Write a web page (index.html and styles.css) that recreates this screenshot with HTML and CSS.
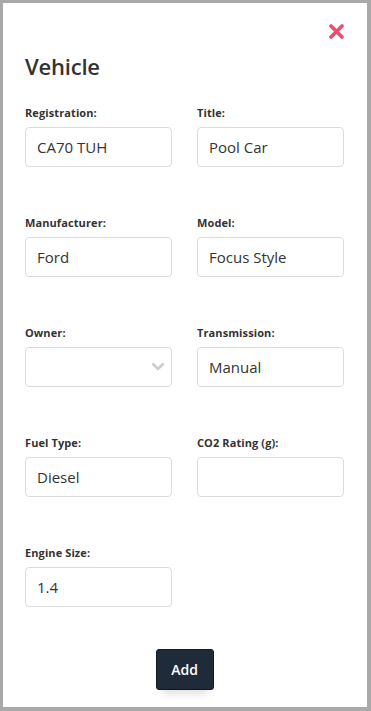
FILE: index.html
```html
<!DOCTYPE html>
<html>
  <head>
    <title>Vehicle</title>
    <meta name="viewport" content="width=device-width, initial-scale=1.0" />
    <link rel="stylesheet" href="styles.css">
  </head>
  <body>
    <div class="panel">
      <div class="panel-top">
        <button type="button" class="close" aria-label="Close">
          <svg width="15" height="15" viewBox="0 0 15 15">
            <path d="M2 2 L13 13 M13 2 L2 13" stroke="#f04a6e" stroke-width="3.6" stroke-linecap="round" />
          </svg>
        </button>
      </div>
      <h2>Vehicle</h2>
      <form class="fields">
        <div class="field">
          <label for="registration">Registration:</label>
          <input type="text" id="registration" value="CA70 TUH" />
        </div>
        <div class="field">
          <label for="title">Title:</label>
          <input type="text" id="title" value="Pool Car" />
        </div>
        <div class="field">
          <label for="manufacturer">Manufacturer:</label>
          <input type="text" id="manufacturer" value="Ford" />
        </div>
        <div class="field">
          <label for="model">Model:</label>
          <input type="text" id="model" value="Focus Style" />
        </div>
        <div class="field">
          <label for="owner">Owner:</label>
          <div class="select-box">
            <select id="owner">
              <option value=""></option>
            </select>
            <svg class="chevron" width="14" height="9" viewBox="0 0 14 9">
              <path d="M1.5 1.5 L7 7 L12.5 1.5" fill="none" stroke="#cccccc" stroke-width="2.6" />
            </svg>
          </div>
        </div>
        <div class="field">
          <label for="transmission">Transmission:</label>
          <input type="text" id="transmission" value="Manual" />
        </div>
        <div class="field">
          <label for="fuel">Fuel Type:</label>
          <input type="text" id="fuel" value="Diesel" />
        </div>
        <div class="field">
          <label for="co2">CO2 Rating (g):</label>
          <input type="text" id="co2" value="" />
        </div>
        <div class="field">
          <label for="engine">Engine Size:</label>
          <input type="text" id="engine" value="1.4" />
        </div>
      </form>
      <div class="actions">
        <button type="button" class="add">Add</button>
      </div>
    </div>
  </body>
</html>
```

FILE: styles.css
```css
body {
  font-family: "Open Sans", "Noto Sans", sans-serif;
  margin: 0;
  background-color: #a9a9a9;
  color: #333333;
}

.panel {
  background: white;
  margin: 3px 4px 4px 3px;
  height: 704px;
  box-sizing: border-box;
  padding: 21px 23px 0 22px;
}

.panel-top {
  display: flex;
  justify-content: flex-end;
}

.close {
  background: none;
  border: none;
  padding: 0;
  width: 15px;
  height: 15px;
  cursor: pointer;
  display: block;
}

.close svg {
  display: block;
}

h2 {
  font-size: 22px;
  font-weight: 600;
  margin: 12px 0 0 0;
  line-height: 30px;
  letter-spacing: -0.2px;
}

.fields {
  display: grid;
  grid-template-columns: 147px 147px;
  column-gap: 25px;
  row-gap: 48px;
  margin-top: 24px;
}

.field label {
  display: block;
  font-size: 11px;
  font-weight: 700;
  line-height: 16px;
  margin-bottom: 6px;
  letter-spacing: 0.1px;
}

.field input,
.select-box select {
  display: block;
  width: 100%;
  height: 40px;
  box-sizing: border-box;
  border: 1px solid #dcdcdc;
  border-radius: 4px;
  padding: 0 11px;
  font-family: inherit;
  font-size: 15px;
  color: #333333;
  background: white;
}

.select-box {
  position: relative;
}

.select-box select {
  appearance: none;
}

.chevron {
  position: absolute;
  right: 7px;
  top: 15px;
}

.actions {
  display: flex;
  justify-content: center;
  margin-top: 42px;
}

.add {
  width: 58px;
  height: 41px;
  background-color: #1f2b38;
  border: 1px solid #111a22;
  border-radius: 3px;
  color: white;
  font-family: inherit;
  font-size: 14px;
  font-weight: 600;
  box-shadow: 0 10px 8px -6px rgba(0, 0, 0, 0.12);
  cursor: pointer;
}
```
